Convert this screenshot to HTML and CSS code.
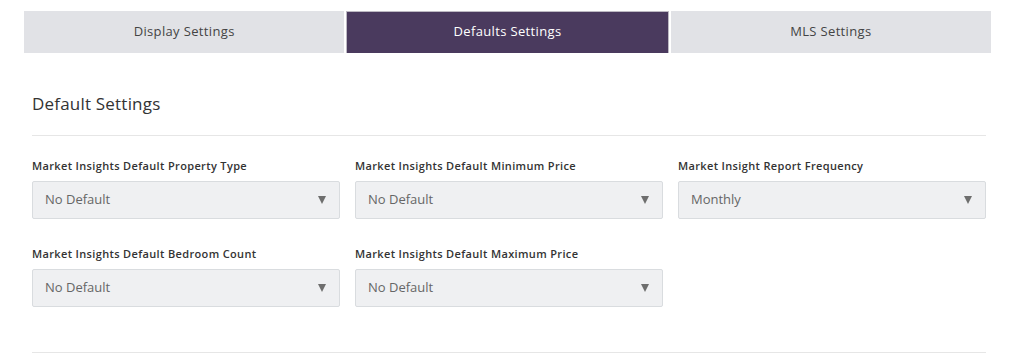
FILE: index.html
```html
<!DOCTYPE html>
<html lang="en">
<head>
    <meta charset="UTF-8">
    <meta name="viewport" content="width=device-width, initial-scale=1.0">
    <title>Defaults Settings</title>
    <link rel="stylesheet" href="styles.css">
</head>
<body>
    <div class="tabs">
        <div class="tab">Display Settings</div>
        <div class="tab active">Defaults Settings</div>
        <div class="tab">MLS Settings</div>
    </div>
    <div class="panel">
        <h2 class="panel-title">Default Settings</h2>
        <div class="fields">
            <div class="field">
                <label>Market Insights Default Property Type</label>
                <div class="select"><span>No Default</span><i class="caret"></i></div>
            </div>
            <div class="field">
                <label>Market Insights Default Minimum Price</label>
                <div class="select"><span>No Default</span><i class="caret"></i></div>
            </div>
            <div class="field">
                <label>Market Insight Report Frequency</label>
                <div class="select"><span>Monthly</span><i class="caret"></i></div>
            </div>
            <div class="field">
                <label>Market Insights Default Bedroom Count</label>
                <div class="select"><span>No Default</span><i class="caret"></i></div>
            </div>
            <div class="field">
                <label>Market Insights Default Maximum Price</label>
                <div class="select"><span>No Default</span><i class="caret"></i></div>
            </div>
        </div>
        <div class="panel-bottom"></div>
    </div>
</body>
</html>
```

FILE: styles.css
```css
body {
    margin: 0;
    font-family: 'Open Sans', 'Lato', sans-serif;
    background-color: #ffffff;
    color: #333333;
}
.tabs {
    display: flex;
    gap: 2px;
    margin: 11px 21px 0 24px;
}
.tab {
    flex: 1;
    height: 42px;
    display: flex;
    align-items: center;
    justify-content: center;
    padding-bottom: 3px;
    background-color: #e1e2e6;
    color: #444444;
    font-size: 13px;
    letter-spacing: 0.35px;
    box-sizing: border-box;
}
.tab.active {
    background-color: #4a3a5e;
    color: #ffffff;
    border: 1px solid #bdb9c3;
    border-bottom: none;
}
.panel {
    padding: 0 26px 0 32px;
}
.panel-title {
    margin: 39px 0 0;
    font-size: 17px;
    font-weight: 400;
    line-height: 24px;
    letter-spacing: 0.2px;
    color: #333333;
}
.fields {
    display: grid;
    grid-template-columns: repeat(3, 1fr);
    column-gap: 15px;
    row-gap: 28px;
    margin-top: 19px;
    padding-top: 23px;
    border-top: 1px solid #e6e6e6;
}
.field label {
    display: block;
    font-size: 11px;
    font-weight: 600;
    line-height: 14px;
    letter-spacing: 0.35px;
    color: #333333;
    margin-bottom: 8px;
}
.select {
    height: 38px;
    box-sizing: border-box;
    display: flex;
    align-items: center;
    justify-content: space-between;
    padding: 0 13px 2px 12px;
    background-color: #eff0f2;
    border: 1px solid #d9dcdf;
    border-radius: 2px;
    font-size: 13px;
    color: #666666;
}
.caret {
    width: 0;
    height: 0;
    margin-top: 2px;
    border-left: 4.5px solid transparent;
    border-right: 4.5px solid transparent;
    border-top: 8px solid #6e6e6e;
}
.panel-bottom {
    margin-top: 45px;
    border-top: 1px solid #e6e6e6;
}
```
